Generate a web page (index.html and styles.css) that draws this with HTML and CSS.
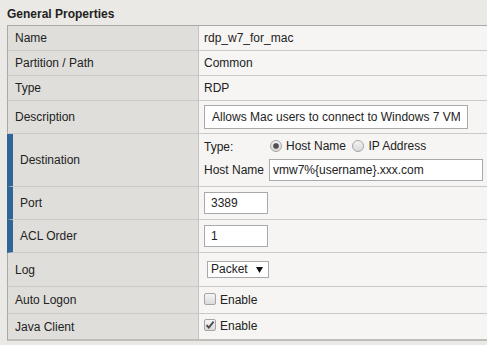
FILE: index.html
```html
<!DOCTYPE html>
<html lang="en">
<head>
    <meta charset="UTF-8">
    <title>General Properties</title>
    <link rel="stylesheet" href="styles.css">
</head>
<body>
<h3 class="section-title">General Properties</h3>
<table class="props">
    <colgroup>
        <col class="label-col">
        <col>
    </colgroup>
    <tbody>
    <tr class="row-s">
        <th>Name</th>
        <td>rdp_w7_for_mac</td>
    </tr>
    <tr class="row-s">
        <th>Partition / Path</th>
        <td>Common</td>
    </tr>
    <tr class="row-s">
        <th>Type</th>
        <td>RDP</td>
    </tr>
    <tr class="row-m">
        <th>Description</th>
        <td><input type="text" class="desc-input" value="Allows Mac users to connect to Windows 7 VM"></td>
    </tr>
    <tr class="row-l sub">
        <th>Destination</th>
        <td>
            <div class="dest">
                <span>Type:</span>
                <span class="radios">
                    <label><input type="radio" name="destType" checked> Host Name</label>
                    <label class="second"><input type="radio" name="destType"> IP Address</label>
                </span>
                <span>Host Name</span>
                <input type="text" class="host-input" value="vmw7%{username}.xxx.com">
            </div>
        </td>
    </tr>
    <tr class="row-m sub">
        <th>Port</th>
        <td><input type="text" class="short-input" value="3389"></td>
    </tr>
    <tr class="row-m sub">
        <th>ACL Order</th>
        <td><input type="text" class="short-input" value="1"></td>
    </tr>
    <tr class="row-log">
        <th>Log</th>
        <td>
            <span class="select">
                <select>
                    <option>Packet</option>
                </select>
                <svg class="caret" width="7" height="6" viewBox="0 0 7 6"><path d="M0 0h7L3.5 6z" fill="#111"/></svg>
            </span>
        </td>
    </tr>
    <tr class="row-c">
        <th>Auto Logon</th>
        <td><label class="check"><span class="box"></span>Enable</label></td>
    </tr>
    <tr class="row-c last">
        <th>Java Client</th>
        <td>
            <label class="check">
                <span class="box"><svg width="10" height="10" viewBox="0 0 10 10"><path d="M1.5 5.2l2.3 2.4L8.6 1.6" fill="none" stroke="#4a4a4a" stroke-width="1.8"/></svg></span>Enable
            </label>
        </td>
    </tr>
    </tbody>
</table>
</body>
</html>
```

FILE: styles.css
```css
body {
    margin: 0;
    padding: 7px 0 0 7px;
    background: #ebe9e6;
    font-family: "Liberation Sans", Arial, sans-serif;
    font-size: 12px;
    color: #222;
    overflow: hidden;
}

.section-title {
    margin: 0 0 3px;
    font-size: 12px;
    line-height: 15px;
    font-weight: bold;
}

.props {
    width: 490px;
    border-collapse: separate;
    border-spacing: 0;
    table-layout: fixed;
    border-top: 1px solid #a9a8a5;
}

.label-col {
    width: 192px;
}

.props th,
.props td {
    border-bottom: 1px solid #cbc9c5;
    vertical-align: middle;
    white-space: nowrap;
}

.props th {
    font-weight: normal;
    text-align: left;
    padding: 0 7px;
    background: #dfdeda;
    border-left: 1px solid #a9a8a5;
    border-right: 1px solid #c6c4c0;
}

.props td {
    padding: 0 5px;
    background: #f6f5f3;
}

.props .sub th {
    border-left: 6px solid #2f6597;
    padding-left: 7px;
}

.row-s { height: 25px; }
.row-m { height: 33px; }
.row-l { height: 53px; }
.row-log { height: 34px; }
.row-c { height: 27px; }

.props .last th,
.props .last td {
    border-bottom: 2px solid #bfbdb9;
}

input[type="text"],
select {
    box-sizing: border-box;
    margin: 0;
    font-family: "Liberation Sans", Arial, sans-serif;
    font-size: 12px;
    color: #222;
    background: #fff;
    border: 1px solid #a9a9a9;
    border-radius: 0;
    outline: none;
    vertical-align: middle;
}

.desc-input {
    width: 264px;
    height: 24px;
    padding: 0 7px;
}

.host-input {
    width: 214px;
    height: 22px;
    padding: 0 3px;
}

.short-input {
    width: 64px;
    height: 22px;
    padding: 0 6px;
}

.dest {
    display: grid;
    grid-template-columns: 65px auto;
    grid-template-rows: 16px 22px;
    row-gap: 4px;
    align-items: center;
}

.radios label {
    display: inline-flex;
    align-items: center;
    gap: 4px;
}

.radios .second {
    margin-left: 2px;
}

input[type="radio"] {
    appearance: none;
    -webkit-appearance: none;
    box-sizing: border-box;
    width: 12px;
    height: 12px;
    margin: 0 0 0 1px;
    border: 1px solid #a5a5a5;
    border-radius: 50%;
    background: linear-gradient(#f3f3f3, #d9d9d9);
}

input[type="radio"]:checked {
    background: radial-gradient(circle, #505050 0 2.2px, #8a8a8a 2.8px, transparent 3.4px),
                linear-gradient(#f3f3f3, #d9d9d9);
}

.select {
    position: relative;
    display: inline-block;
    margin-left: 3px;
    vertical-align: middle;
}

.select select {
    appearance: none;
    -webkit-appearance: none;
    display: block;
    width: 62px;
    height: 17px;
    padding: 0 0 0 3px;
    line-height: 15px;
}

.select .caret {
    position: absolute;
    right: 6px;
    top: 6px;
}

.check {
    display: inline-flex;
    align-items: flex-end;
    gap: 4px;
}

.check .box {
    box-sizing: border-box;
    display: block;
    width: 12px;
    height: 12px;
    margin-bottom: 2px;
    border: 1px solid #a5a5a5;
    border-radius: 2px;
    background: linear-gradient(#f5f5f5, #dadada);
}

.check .box svg {
    display: block;
}
```
